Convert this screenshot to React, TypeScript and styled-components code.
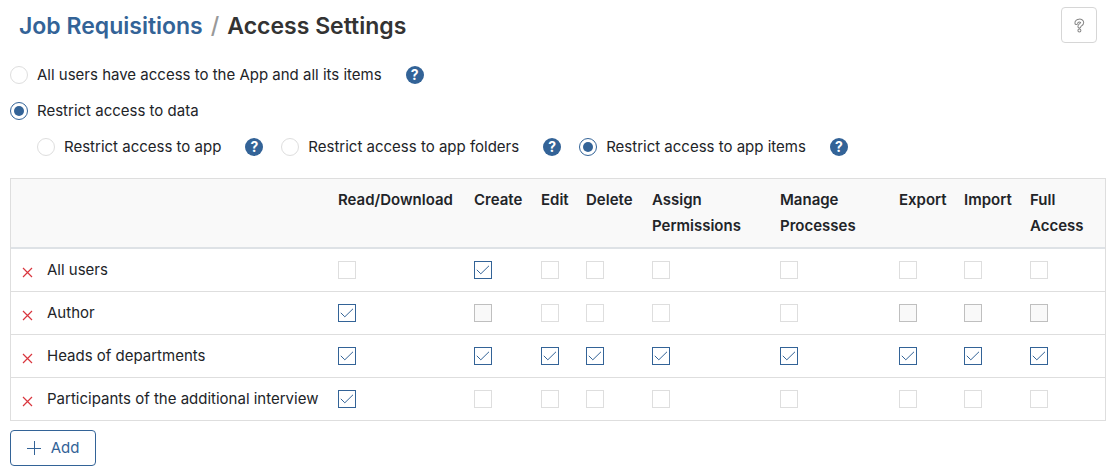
import React, { useId, useState } from "react";
import styled, { createGlobalStyle } from "styled-components";

const blue = "#336397";
const line = "#dedede";

const GlobalStyle = createGlobalStyle`
  * { box-sizing: border-box; }
  body {
    margin: 0;
    background: #fff;
    color: #222428;
    font-family: Inter, "Liberation Sans", sans-serif;
    font-size: 15px;
    line-height: 26px;
  }
  button, input { font: inherit; margin: 0; }
`;

const Page = styled.main`
  padding: 7px 7px 4px 10px;
`;

const Header = styled.header`
  display: flex;
  align-items: center;
  justify-content: space-between;
  height: 36px;
  padding: 0 9px;
`;

const Title = styled.h1`
  display: flex;
  gap: 8px;
  margin: 0;
  padding-top: 2px;
  font-size: 23px;
  font-weight: 600;
  line-height: 34px;
  color: #333;
`;

const TitleLink = styled.a`
  color: ${blue};
  text-decoration: none;
`;

const Slash = styled.span`
  color: #999;
  font-weight: 500;
`;

const HelpButton = styled.button`
  display: grid;
  place-items: center;
  width: 36px;
  height: 36px;
  padding: 0;
  border: 1px solid #d6d6d6;
  border-radius: 4px;
  background: #fff;
`;

const Options = styled.div`
  display: flex;
  flex-direction: column;
  gap: 10px;
  padding: 19px 0 18px;
`;

const OptionRow = styled.div<{ $nested?: boolean }>`
  display: flex;
  align-items: center;
  gap: 18px;
  padding-left: ${(p) => (p.$nested ? 27 : 0)}px;
`;

const Option = styled.div`
  display: flex;
  align-items: center;
  gap: 24px;
`;

const OptionLabel = styled.label`
  display: flex;
  align-items: center;
  gap: 9px;
  white-space: nowrap;
`;

const Radio = styled.input`
  appearance: none;
  display: grid;
  place-items: center;
  flex: none;
  width: 18px;
  height: 18px;
  border: 1px solid ${line};
  border-radius: 50%;
  background: #fff;

  &:checked { border-color: ${blue}; }
  &:checked::before {
    content: "";
    width: 10px;
    height: 10px;
    border-radius: 50%;
    background: ${blue};
  }
`;

const Hint = styled.button`
  width: 18px;
  height: 18px;
  padding: 0;
  border: 0;
  border-radius: 50%;
  background: ${blue};
  color: #fff;
  font-size: 14px;
  font-weight: 700;
  line-height: 18px;
  text-align: center;
`;

const Table = styled.table`
  width: 100%;
  table-layout: fixed;
  border-collapse: separate;
  border-spacing: 0;
  border: 1px solid ${line};
  border-bottom: 0;
`;

const Col = styled.col<{ $width?: number }>`
  width: ${(p) => (p.$width ? `${p.$width}px` : "auto")};
`;

const HeadCell = styled.th`
  padding: 8px;
  border-bottom: 2px solid #dee2e6;
  background: #f9f9f9;
  font-weight: 600;
  text-align: left;
  vertical-align: top;
`;

const Cell = styled.td`
  padding: 8px;
  border-bottom: 1px solid ${line};
`;

const NameCell = styled.th`
  padding: 8px 0 8px 11px;
  border-bottom: 1px solid ${line};
  font-weight: 400;
  text-align: left;
`;

const Subject = styled.div`
  display: flex;
  align-items: center;
  gap: 14px;
  white-space: nowrap;
`;

const RemoveButton = styled.button`
  display: flex;
  padding: 5px 0 0;
  border: 0;
  background: none;
`;

const CheckBox = styled.span`
  display: grid;
  width: 18px;
  height: 18px;
  & > * { grid-area: 1 / 1; }
  & > svg { pointer-events: none; }
`;

const CheckInput = styled.input`
  appearance: none;
  width: 18px;
  height: 18px;
  border: 1px solid ${line};
  background: #fff;
  &:checked { border-color: ${blue}; }
  &:disabled { border-color: #bfbfbf; background: #f9f9f9; }
`;

const AddButton = styled.button`
  display: flex;
  align-items: center;
  justify-content: center;
  gap: 10px;
  width: 86px;
  height: 36px;
  margin-top: 9px;
  padding: 0;
  border: 1px solid ${blue};
  border-radius: 4px;
  background: #fff;
  color: ${blue};
`;

const columns = [
  { name: "Read/Download", width: 136 },
  { name: "Create", width: 67 },
  { name: "Edit", width: 45 },
  { name: "Delete", width: 66 },
  { name: "Assign Permissions", width: 128 },
  { name: "Manage Processes", width: 119 },
  { name: "Export", width: 65 },
  { name: "Import", width: 66 },
  { name: "Full Access", width: 83 },
];

/* One mark per column: x = granted, - = locked, . = not granted */
const subjects = [
  { name: "All users", rights: ".x......." },
  { name: "Author", rights: "x-....---" },
  { name: "Heads of departments", rights: "xxxxxxxxx" },
  { name: "Participants of the additional interview", rights: "x........" },
];

function Check({ initial, locked, label }: { initial: boolean; locked: boolean; label: string }) {
  const [on, setOn] = useState(initial);
  return (
    <CheckBox>
      <CheckInput
        type="checkbox"
        aria-label={label}
        checked={on}
        disabled={locked}
        onChange={(e) => setOn(e.target.checked)}
      />
      {on && (
        <svg width="18" height="18" viewBox="0 0 18 18" fill="none" stroke={blue} aria-hidden="true">
          <path d="M2.8 8.8L6.8 12.8L15 4.8" />
        </svg>
      )}
    </CheckBox>
  );
}

function RadioOption(props: { group: string; text: string; checked?: boolean; hint?: boolean }) {
  const id = useId();
  return (
    <Option>
      <OptionLabel htmlFor={id}>
        <Radio id={id} type="radio" name={props.group} defaultChecked={props.checked} />
        {props.text}
      </OptionLabel>
      {props.hint && <Hint type="button" aria-label={`Help: ${props.text}`}>?</Hint>}
    </Option>
  );
}

export default function App() {
  return (
    <Page>
      <GlobalStyle />
      <Header>
        <Title>
          <TitleLink href="#requisitions">Job Requisitions</TitleLink>
          <Slash>/</Slash>
          <span>Access Settings</span>
        </Title>
        <HelpButton type="button" aria-label="Help">
          <svg width="12" height="16" viewBox="0 0 12 16" fill="none" strokeLinejoin="round">
            <path d="M3.4 6C3.2 3 9.2 2.8 9.2 5.6C9.2 7.8 6.4 7.4 6.4 9.6M6.4 13.4V13.5" stroke="#858585" strokeWidth="4" strokeLinecap="round" />
            <path d="M3.4 6C3.2 3 9.2 2.8 9.2 5.6C9.2 7.8 6.4 7.4 6.4 9.6M6.4 13.4V13.5" stroke="#fff" strokeWidth="2" strokeLinecap="round" />
          </svg>
        </HelpButton>
      </Header>

      <Options>
        <OptionRow>
          <RadioOption group="scope" text="All users have access to the App and all its items" hint />
        </OptionRow>
        <OptionRow>
          <RadioOption group="scope" text="Restrict access to data" checked />
        </OptionRow>
        <OptionRow $nested>
          <RadioOption group="level" text="Restrict access to app" hint />
          <RadioOption group="level" text="Restrict access to app folders" hint />
          <RadioOption group="level" text="Restrict access to app items" checked hint />
        </OptionRow>
      </Options>

      <Table>
        <colgroup>
          <Col />
          {columns.map((c) => <Col key={c.name} $width={c.width} />)}
        </colgroup>
        <thead>
          <tr>
            <HeadCell aria-label="Users" />
            {columns.map((c) => <HeadCell key={c.name} scope="col">{c.name}</HeadCell>)}
          </tr>
        </thead>
        <tbody>
          {subjects.map((s) => (
            <tr key={s.name}>
              <NameCell scope="row">
                <Subject>
                  <RemoveButton type="button" aria-label={`Remove ${s.name}`}>
                    <svg width="11" height="11" viewBox="0 0 11 11" stroke="#d9363e" strokeWidth="1.2">
                      <path d="M1 1L10 10M10 1L1 10" />
                    </svg>
                  </RemoveButton>
                  {s.name}
                </Subject>
              </NameCell>
              {columns.map((c, i) => (
                <Cell key={c.name}>
                  <Check
                    initial={s.rights[i] === "x"}
                    locked={s.rights[i] === "-"}
                    label={`${s.name}: ${c.name}`}
                  />
                </Cell>
              ))}
            </tr>
          ))}
        </tbody>
      </Table>

      <AddButton type="button">
        <svg width="14" height="14" viewBox="0 0 14 14" stroke={blue} aria-hidden="true">
          <path d="M7.5 0V14M0 7.5H14" />
        </svg>
        Add
      </AddButton>
    </Page>
  );
}
